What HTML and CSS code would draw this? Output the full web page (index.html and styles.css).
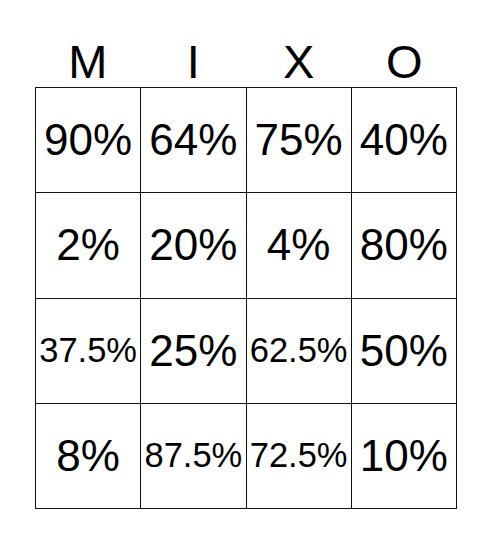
FILE: index.html
```html
<!DOCTYPE html>
<html>
<head>
<meta charset="utf-8">
<link rel="stylesheet" href="styles.css">
</head>
<body>
<div class="card">
  <div class="header">
    <div class="letter">M</div>
    <div class="letter">I</div>
    <div class="letter">X</div>
    <div class="letter">O</div>
  </div>
  <div class="board">
    <div class="cell">90%</div>
    <div class="cell">64%</div>
    <div class="cell">75%</div>
    <div class="cell">40%</div>
    <div class="cell">2%</div>
    <div class="cell">20%</div>
    <div class="cell">4%</div>
    <div class="cell">80%</div>
    <div class="cell small">37.5%</div>
    <div class="cell">25%</div>
    <div class="cell small">62.5%</div>
    <div class="cell">50%</div>
    <div class="cell">8%</div>
    <div class="cell small">87.5%</div>
    <div class="cell small">72.5%</div>
    <div class="cell">10%</div>
  </div>
</div>
</body>
</html>
```

FILE: styles.css
```css
html, body {
  margin: 0;
  padding: 0;
  background: #fff;
}
body {
  font-family: "Liberation Sans", Arial, sans-serif;
  color: #000;
}
.card {
  width: 422px;
  margin: 0 auto;
  padding-top: 38px;
}
.header {
  display: grid;
  grid-template-columns: repeat(4, 1fr);
  height: 49px;
}
.letter {
  font-size: 47px;
  line-height: 47px;
  text-align: center;
}
.board {
  display: grid;
  grid-template-columns: repeat(4, 1fr);
  grid-template-rows: repeat(4, 105.25px);
  width: 421px;
  border-left: 1px solid #111;
  border-top: 1px solid #111;
}
.cell {
  border-right: 1px solid #111;
  border-bottom: 1px solid #111;
  display: flex;
  align-items: center;
  justify-content: center;
  font-size: 44px;
  white-space: nowrap;
}
.cell.small {
  font-size: 34.5px;
}
```
